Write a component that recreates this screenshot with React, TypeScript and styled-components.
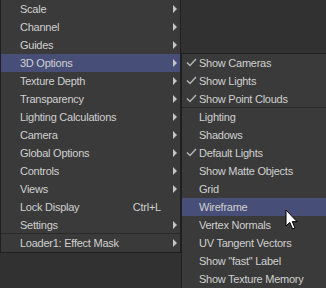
import React from 'react';
import styled, { createGlobalStyle } from 'styled-components';

type Item = {
	label: string;
	arrow?: boolean;
	checked?: boolean;
	shortcut?: string;
	active?: boolean;
	separator?: boolean;
};

const mainItems: Item[] = [
	{ label: 'Scale', arrow: true },
	{ label: 'Channel', arrow: true },
	{ label: 'Guides', arrow: true },
	{ label: '3D Options', arrow: true, active: true },
	{ label: 'Texture Depth', arrow: true },
	{ label: 'Transparency', arrow: true },
	{ label: 'Lighting Calculations', arrow: true },
	{ label: 'Camera', arrow: true },
	{ label: 'Global Options', arrow: true },
	{ label: 'Controls', arrow: true },
	{ label: 'Views', arrow: true },
	{ label: 'Lock Display', shortcut: 'Ctrl+L' },
	{ label: 'Settings', arrow: true, separator: true },
	{ label: 'Loader1: Effect Mask', arrow: true },
];

const subItems: Item[] = [
	{ label: 'Show Cameras', checked: true },
	{ label: 'Show Lights', checked: true },
	{ label: 'Show Point Clouds', checked: true, separator: true },
	{ label: 'Lighting' },
	{ label: 'Shadows' },
	{ label: 'Default Lights', checked: true },
	{ label: 'Show Matte Objects' },
	{ label: 'Grid' },
	{ label: 'Wireframe', active: true },
	{ label: 'Vertex Normals' },
	{ label: 'UV Tangent Vectors' },
	{ label: 'Show "fast" Label' },
	{ label: 'Show Texture Memory' },
];

const GlobalStyle = createGlobalStyle`
	html, body {
		margin: 0;
		padding: 0;
		background: #313131;
		overflow: hidden;
	}
`;

const Screen = styled.div`
	position: relative;
	width: 326px;
	height: 288px;
	overflow: hidden;
	display: flex;
	align-items: flex-start;
	background: #313131;
	font-family: 'Liberation Sans', Arial, sans-serif;
	font-size: 11px;
	letter-spacing: -0.25px;
	color: #d0d0d0;
`;

const Menu = styled.div<{ $top: number; $width: number; $pad: number }>`
	flex: none;
	box-sizing: border-box;
	margin-top: ${(p) => p.$top}px;
	width: ${(p) => p.$width}px;
	background: #3a3a3a;
	border: 1px solid #1f1f1f;
	--pad: ${(p) => p.$pad}px;
`;

const Row = styled.div<{ $active?: boolean; $sep?: boolean }>`
	position: relative;
	box-sizing: border-box;
	height: 18px;
	display: flex;
	align-items: center;
	padding-left: var(--pad);
	padding-right: 19px;
	background: ${(p) => (p.$active ? '#474f79' : 'transparent')};
	border-bottom: 1px solid ${(p) => (p.$sep ? '#2a2a2a' : 'transparent')};
	white-space: nowrap;
`;

const Label = styled.span`
	flex: 1;
	line-height: 18px;
`;

const Shortcut = styled.span`
	margin-right: 0;
`;

const Check = styled.span`
	position: absolute;
	left: 4px;
	top: 4px;
	width: 11px;
	height: 9px;
	display: flex;
`;

const Arrow = styled.span`
	position: absolute;
	right: 3px;
	top: 5px;
	width: 0;
	height: 0;
	border-top: 4px solid transparent;
	border-bottom: 4px solid transparent;
	border-left: 4px solid #c4c4c4;
`;

const Cursor = styled.svg`
	position: absolute;
	left: 285px;
	top: 209px;
`;

const CheckIcon = () => (
	<svg width="11" height="9" viewBox="0 0 11 9">
		<path d="M1 4.5 L4 7.5 L10 1" fill="none" stroke="#b4b4b4" strokeWidth="1.5" />
	</svg>
);

const MenuRows = ({ items }: { items: Item[] }) => (
	<>
		{items.map((item, i) => (
			<Row key={i} $active={item.active} $sep={item.separator}>
				{item.checked && (
					<Check>
						<CheckIcon />
					</Check>
				)}
				<Label>{item.label}</Label>
				{item.shortcut && <Shortcut>{item.shortcut}</Shortcut>}
				{item.arrow && <Arrow />}
			</Row>
		))}
	</>
);

const App = () => {
	return (
		<>
			<GlobalStyle />
			<Screen>
				<Menu $top={-1} $width={181} $pad={19}>
					<MenuRows items={mainItems} />
				</Menu>
				<Menu $top={53} $width={170} $pad={17}>
					<MenuRows items={subItems} />
				</Menu>
				<Cursor width="13" height="22" viewBox="0 0 13 22">
					<path
						d="M1 1 L1 17 L4.8 13.4 L7.6 20 L10 19 L7.3 12.6 L12 12.6 Z"
						fill="#ffffff"
						stroke="#000000"
						strokeWidth="1"
						strokeLinejoin="miter"
					/>
				</Cursor>
			</Screen>
		</>
	);
};

export default App;
